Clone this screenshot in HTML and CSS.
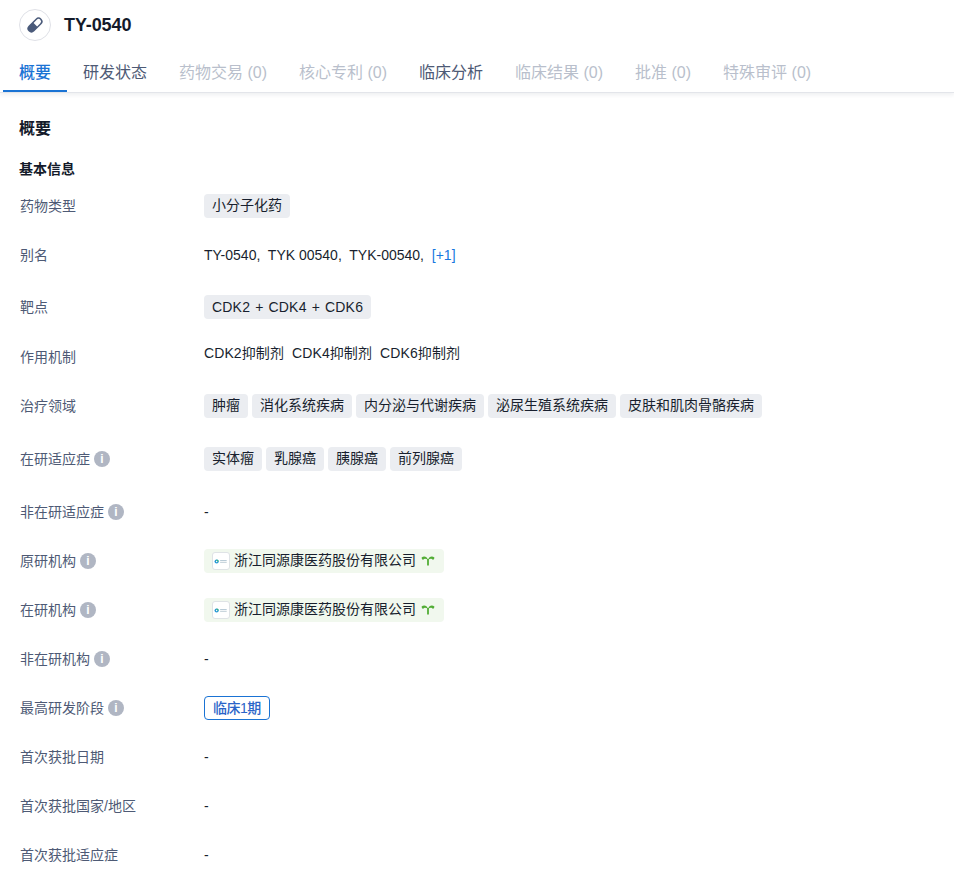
FILE: index.html
```html
<!DOCTYPE html>
<html lang="zh">
<head>
<meta charset="utf-8">
<title>TY-0540</title>
<link rel="stylesheet" href="styles.css">
</head>
<body>
<header class="head">
  <div class="title-bar">
    <span class="avatar">
      <svg width="20" height="20" viewBox="0 0 20 20"><g transform="rotate(-45 10 10)"><rect x="1" y="6" width="18" height="8" rx="4" fill="#4a5a7a"/><path d="M10.500 7.500h4.500a2.500 2.500 0 0 1 0 5h-4.500z" fill="#fff"/></g></svg>
    </span>
    <h1 class="title">TY-0540</h1>
  </div>
  <nav class="tabs">
    <span class="tab active">概要</span>
    <span class="tab">研发状态</span>
    <span class="tab muted">药物交易 (0)</span>
    <span class="tab muted">核心专利 (0)</span>
    <span class="tab">临床分析</span>
    <span class="tab muted">临床结果 (0)</span>
    <span class="tab muted">批准 (0)</span>
    <span class="tab muted">特殊审评 (0)</span>
  </nav>
</header>
<main class="content">
  <h2 class="section">概要</h2>
  <h3 class="sub">基本信息</h3>
  <div class="row"><div class="label">药物类型</div><div class="value"><span class="tag">小分子化药</span></div></div>
  <div class="row gap-28"><div class="label">别名</div><div class="value plain alias">TY-0540,&nbsp; TYK 00540,&nbsp; TYK-00540,&nbsp; <a class="more">[+1]</a></div></div>
  <div class="row gap-26"><div class="label">靶点</div><div class="value"><span class="tag combo">CDK2 + CDK4 + CDK6</span></div></div>
  <div class="row"><div class="label">作用机制</div><div class="value plain top">CDK2抑制剂&nbsp; CDK4抑制剂&nbsp; CDK6抑制剂</div></div>
  <div class="row gap-29"><div class="label">治疗领域</div><div class="value"><span class="tag">肿瘤</span><span class="tag">消化系统疾病</span><span class="tag">内分泌与代谢疾病</span><span class="tag">泌尿生殖系统疾病</span><span class="tag">皮肤和肌肉骨骼疾病</span></div></div>
  <div class="row gap-29"><div class="label">在研适应症<i class="info">i</i></div><div class="value"><span class="tag">实体瘤</span><span class="tag">乳腺癌</span><span class="tag">胰腺癌</span><span class="tag">前列腺癌</span></div></div>
  <div class="row"><div class="label">非在研适应症<i class="info">i</i></div><div class="value plain">-</div></div>
  <div class="row"><div class="label">原研机构<i class="info">i</i></div><div class="value"><span class="org">
    <span class="logo"><svg width="16" height="8" viewBox="0 0 16 8"><circle cx="3" cy="4" r="2.400" fill="#2b9ad6"/><path d="M3 1.600a2.400 2.400 0 0 1 2.400 2.400H3z" fill="#39b27a"/><circle cx="3" cy="4" r=".8" fill="#fff"/><rect x="7" y="2.600" width="7.500" height="1" fill="#9fb8c8"/><rect x="7" y="4.600" width="7.500" height="1" fill="#c3d0d8"/></svg></span><span class="org-name">浙江同源康医药股份有限公司</span><svg class="sprout" width="14" height="12" viewBox="0 0 14 12"><path d="M7 11.500V5" stroke="#52ad35" stroke-width="1.800" fill="none"/><path d="M7 5.800C6 2.500 3 1.500 .6 3.500 .6 4.700 1.200 5.600 2.100 5.900 2.800 4.500 4.500 4.200 7 5.800zM7 5.800C8 2.500 11 1.500 13.400 3.500 13.400 4.700 12.800 5.600 11.900 5.900 11.200 4.500 9.500 4.200 7 5.800z" fill="#52ad35"/></svg></span></div></div>
  <div class="row"><div class="label">在研机构<i class="info">i</i></div><div class="value"><span class="org">
    <span class="logo"><svg width="16" height="8" viewBox="0 0 16 8"><circle cx="3" cy="4" r="2.400" fill="#2b9ad6"/><path d="M3 1.600a2.400 2.400 0 0 1 2.400 2.400H3z" fill="#39b27a"/><circle cx="3" cy="4" r=".8" fill="#fff"/><rect x="7" y="2.600" width="7.500" height="1" fill="#9fb8c8"/><rect x="7" y="4.600" width="7.500" height="1" fill="#c3d0d8"/></svg></span><span class="org-name">浙江同源康医药股份有限公司</span><svg class="sprout" width="14" height="12" viewBox="0 0 14 12"><path d="M7 11.500V5" stroke="#52ad35" stroke-width="1.800" fill="none"/><path d="M7 5.800C6 2.500 3 1.500 .6 3.500 .6 4.700 1.200 5.600 2.100 5.900 2.800 4.500 4.500 4.200 7 5.800zM7 5.800C8 2.500 11 1.500 13.400 3.500 13.400 4.700 12.800 5.600 11.900 5.900 11.200 4.500 9.500 4.200 7 5.800z" fill="#52ad35"/></svg></span></div></div>
  <div class="row"><div class="label">非在研机构<i class="info">i</i></div><div class="value plain">-</div></div>
  <div class="row"><div class="label">最高研发阶段<i class="info">i</i></div><div class="value"><span class="phase">临床1期</span></div></div>
  <div class="row"><div class="label">首次获批日期</div><div class="value plain">-</div></div>
  <div class="row"><div class="label">首次获批国家/地区</div><div class="value plain">-</div></div>
  <div class="row"><div class="label">首次获批适应症</div><div class="value plain">-</div></div>
</main>
</body>
</html>
```
FILE: styles.css
```css
* { box-sizing: border-box; }
html, body { margin: 0; padding: 0; background: #fff; }
body {
  font-family: "Liberation Sans", "Noto Sans CJK SC", sans-serif;
  font-size: 14px;
  color: #181f2e;
  overflow: hidden;
}
.head {
  height: 93px;
  border-bottom: 1px solid #e3e5ea;
  box-shadow: 0 2px 4px rgba(40, 50, 80, 0.08);
}
.title-bar {
  height: 50px;
  display: flex;
  align-items: center;
  padding: 0 19px;
}
.avatar {
  width: 32px;
  height: 32px;
  border: 1px solid #dfe1e7;
  border-radius: 50%;
  display: flex;
  align-items: center;
  justify-content: center;
  margin-right: 13px;
}
.title {
  margin: 0;
  font-size: 18px;
  line-height: 24px;
  font-weight: 700;
  letter-spacing: -0.1px;
  color: #141a2a;
}
.tabs {
  display: flex;
  padding-left: 3px;
  height: 42px;
}
.tab {
  padding: 0 16px;
  font-size: 16px;
  line-height: 46px;
  height: 42px;
  color: #4e5a75;
}
.tab.muted { color: #b9bfcc; }
.tab.active {
  color: #1a73d4;
  font-weight: 500;
  border-bottom: 2px solid #1a73d4;
}
.content { padding: 0 19px; }
.section {
  margin: 25px 0 0;
  font-size: 16px;
  line-height: 22px;
  font-weight: 700;
  color: #141a2a;
}
.sub {
  margin: 19px 0 0;
  font-size: 14px;
  line-height: 20px;
  font-weight: 700;
  color: #141a2a;
}
.row {
  display: flex;
  align-items: center;
  min-height: 24px;
  margin-bottom: 25px;
}
.sub + .row { margin-top: 15px; }
.gap-26 { margin-bottom: 26px; }
.gap-28 { margin-bottom: 28px; }
.gap-29 { margin-bottom: 29px; }
.label {
  flex: 0 0 185px;
  padding-left: 1px;
  display: flex;
  align-items: center;
  color: #4e5a75;
  line-height: 24px;
}
.info {
  width: 16px;
  height: 16px;
  margin-left: 4px;
  border-radius: 50%;
  background: #b0b6c3;
  color: #fff;
  font: 700 12px/16px "Liberation Sans", sans-serif;
  text-align: center;
}
.value {
  display: flex;
  align-items: center;
  gap: 4px;
  color: #181f2e;
}
.value.plain { display: block; line-height: 24px; }
.value.top { align-self: flex-start; line-height: 16px; letter-spacing: 0.1px; }
.tag {
  height: 24px;
  line-height: 23px;
  padding: 0 8px;
  border-radius: 4px;
  background: #ebedf1;
  color: #181f2e;
}
.tag.combo { line-height: 24px; letter-spacing: 0.2px; word-spacing: 0.9px; }
.more { color: #1677e0; }
.org {
  display: flex;
  align-items: center;
  height: 24px;
  padding: 0 9px 0 8px;
  border-radius: 4px;
  background: #f1f8ee;
  color: #181f2e;
}
.org-name { line-height: 20px; margin-top: -2px; }
.logo {
  width: 18px;
  height: 18px;
  margin-right: 4px;
  border: 1px solid #dfe3e6;
  border-radius: 3px;
  background: #fff;
  display: flex;
  align-items: center;
  justify-content: center;
}
.logo svg { width: 14px; height: 7px; }
.sprout { margin: -2px 0 0 5px; }
.phase {
  height: 24px;
  line-height: 22px;
  padding: 0 8px;
  border: 1px solid #1a73d4;
  border-radius: 4px;
  color: #2b64c8;
  font-weight: 500;
  letter-spacing: -0.5px;
}
```
